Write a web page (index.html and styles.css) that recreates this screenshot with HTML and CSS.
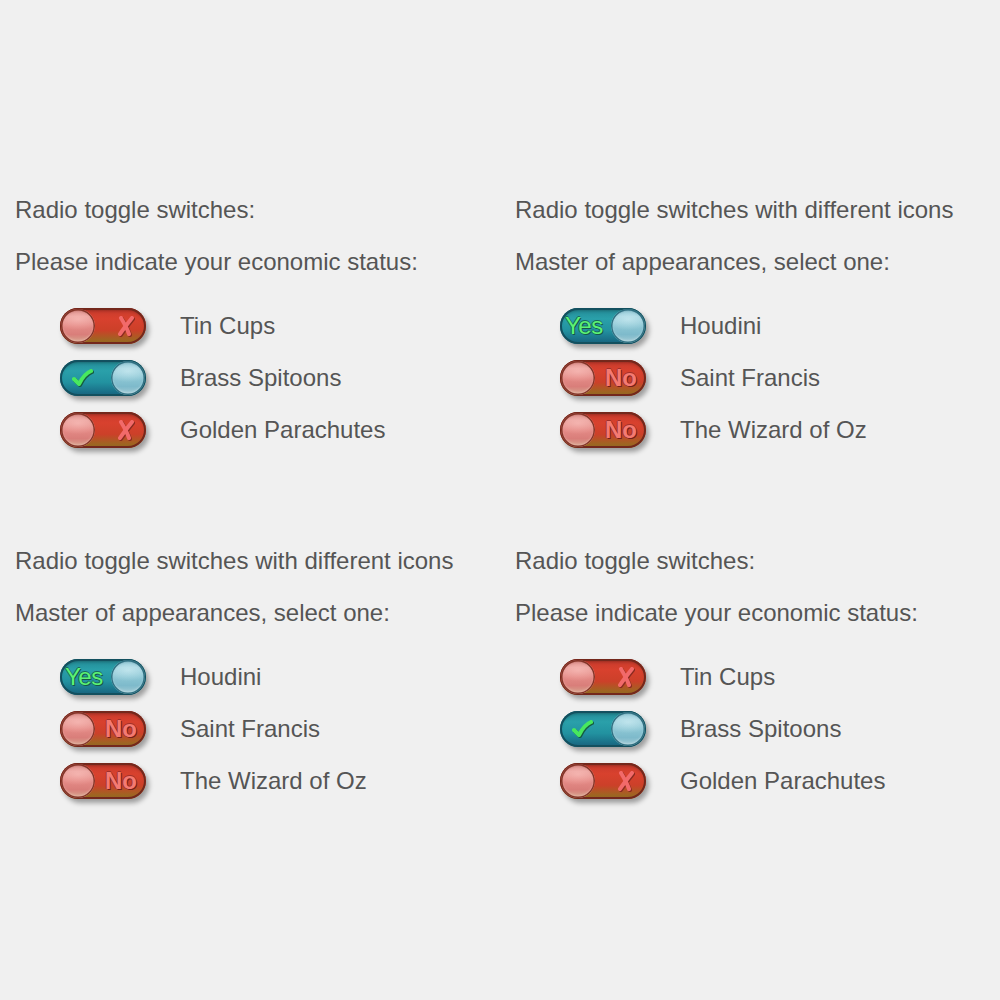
FILE: index.html
```html
<!DOCTYPE html>
<html>
<head>
<meta charset="utf-8">
<link rel="stylesheet" href="styles.css">
</head>
<body>
<div class="page">
  <section class="group">
    <h2 class="title">Radio toggle switches:</h2>
    <p class="prompt">Please indicate your economic status:</p>
    <div class="rows">
      <div class="row"><span class="tog off"><span class="knob"></span><span class="ico x"><svg viewBox="0 0 20 22" width="20" height="22"><path d="M5 3 C8 8 11 13 13 19" /><path d="M16 3 C12 8 8 13 4 19" /></svg></span></span><span class="lbl">Tin Cups</span></div>
      <div class="row"><span class="tog on"><span class="ico chk"><svg viewBox="0 0 22 20" width="22" height="20"><path d="M3 11 L8 16 C11 10 15 5 20 3" /></svg></span><span class="knob"></span></span><span class="lbl">Brass Spitoons</span></div>
      <div class="row"><span class="tog off"><span class="knob"></span><span class="ico x"><svg viewBox="0 0 20 22" width="20" height="22"><path d="M5 3 C8 8 11 13 13 19" /><path d="M16 3 C12 8 8 13 4 19" /></svg></span></span><span class="lbl">Golden Parachutes</span></div>
    </div>
  </section>
  <section class="group">
    <h2 class="title">Radio toggle switches with different icons</h2>
    <p class="prompt">Master of appearances, select one:</p>
    <div class="rows">
      <div class="row"><span class="tog on"><span class="ico yes">Yes</span><span class="knob"></span></span><span class="lbl">Houdini</span></div>
      <div class="row"><span class="tog off"><span class="knob"></span><span class="ico no">No</span></span><span class="lbl">Saint Francis</span></div>
      <div class="row"><span class="tog off"><span class="knob"></span><span class="ico no">No</span></span><span class="lbl">The Wizard of Oz</span></div>
    </div>
  </section>
  <section class="group">
    <h2 class="title">Radio toggle switches with different icons</h2>
    <p class="prompt">Master of appearances, select one:</p>
    <div class="rows">
      <div class="row"><span class="tog on"><span class="ico yes">Yes</span><span class="knob"></span></span><span class="lbl">Houdini</span></div>
      <div class="row"><span class="tog off"><span class="knob"></span><span class="ico no">No</span></span><span class="lbl">Saint Francis</span></div>
      <div class="row"><span class="tog off"><span class="knob"></span><span class="ico no">No</span></span><span class="lbl">The Wizard of Oz</span></div>
    </div>
  </section>
  <section class="group">
    <h2 class="title">Radio toggle switches:</h2>
    <p class="prompt">Please indicate your economic status:</p>
    <div class="rows">
      <div class="row"><span class="tog off"><span class="knob"></span><span class="ico x"><svg viewBox="0 0 20 22" width="20" height="22"><path d="M5 3 C8 8 11 13 13 19" /><path d="M16 3 C12 8 8 13 4 19" /></svg></span></span><span class="lbl">Tin Cups</span></div>
      <div class="row"><span class="tog on"><span class="ico chk"><svg viewBox="0 0 22 20" width="22" height="20"><path d="M3 11 L8 16 C11 10 15 5 20 3" /></svg></span><span class="knob"></span></span><span class="lbl">Brass Spitoons</span></div>
      <div class="row"><span class="tog off"><span class="knob"></span><span class="ico x"><svg viewBox="0 0 20 22" width="20" height="22"><path d="M5 3 C8 8 11 13 13 19" /><path d="M16 3 C12 8 8 13 4 19" /></svg></span></span><span class="lbl">Golden Parachutes</span></div>
    </div>
  </section>
</div>
</body>
</html>
```

FILE: styles.css
```css
html, body {
  margin: 0;
  padding: 0;
  background: #f0f0f0;
}
body {
  font-family: "Liberation Sans", Arial, sans-serif;
  color: #555555;
  width: 1000px;
  height: 1000px;
  overflow: hidden;
}
.page {
  display: grid;
  grid-template-columns: 500px 500px;
  row-gap: 99px;
  padding-top: 196px;
}
.group {
  padding-left: 15px;
}
.title, .prompt {
  margin: 0;
  font-size: 24px;
  font-weight: normal;
  line-height: 28px;
  white-space: nowrap;
}
.title { margin-bottom: 24px; }
.prompt { margin-bottom: 32px; }
.rows {
  display: flex;
  flex-direction: column;
  gap: 16px;
  padding-left: 45px;
}
.row {
  display: flex;
  align-items: center;
  height: 36px;
}
.lbl {
  font-size: 24px;
  line-height: 36px;
  margin-left: 34px;
  white-space: nowrap;
}
.tog {
  box-sizing: border-box;
  width: 86px;
  height: 36px;
  border-radius: 18px;
  display: flex;
  align-items: center;
  justify-content: space-between;
  padding: 0 1px;
}
.tog.off {
  background: linear-gradient(to bottom, #c63a2c 0%, #d8412e 30%, #cc4029 62%, #a06422 88%, #8c6a20 100%);
  box-shadow: 3px 4px 5px rgba(0,0,0,0.35), inset 0 0 0 2px #74281c, inset 0 3px 3px rgba(0,0,0,0.25);
}
.tog.on {
  background: linear-gradient(to bottom, #228894 0%, #2aa0aa 30%, #2292a0 62%, #1a7088 88%, #185f7a 100%);
  box-shadow: 3px 4px 5px rgba(0,0,0,0.35), inset 0 0 0 2px #13505f, inset 0 3px 3px rgba(0,0,0,0.25);
}
.knob {
  box-sizing: border-box;
  width: 34px;
  height: 34px;
  border-radius: 50%;
  flex: none;
}
.off .knob {
  background:
    radial-gradient(ellipse 70% 32% at 50% 30%, rgba(255,200,195,0.55), rgba(255,200,195,0) 100%),
    linear-gradient(to bottom, #d4827e 0%, #e9a09c 22%, #e48a86 50%, #d97e7a 75%, #d6a890 100%);
  box-shadow: inset 0 0 0 1.5px #843428, inset 0 -2px 3px rgba(255,240,220,0.45), inset 0 2px 2px rgba(120,30,20,0.25);
}
.on .knob {
  background:
    radial-gradient(ellipse 70% 32% at 50% 30%, rgba(220,245,250,0.55), rgba(220,245,250,0) 100%),
    linear-gradient(to bottom, #84c0ce 0%, #a0d2de 22%, #8cc6d4 50%, #7ebacb 75%, #a4ccd6 100%);
  box-shadow: inset 0 0 0 1.5px #2f7082, inset 0 -2px 3px rgba(255,255,255,0.45), inset 0 2px 2px rgba(20,70,90,0.25);
}
.ico {
  display: flex;
  align-items: center;
  justify-content: center;
}
.ico svg {
  fill: none;
  stroke-linecap: round;
  stroke-linejoin: round;
}
.ico.x {
  margin-right: 9px;
}
.ico.x svg path {
  stroke: #f26a6a;
  stroke-width: 4;
}
.ico.x svg {
  filter: drop-shadow(1px 1px 0 #8a2a20);
}
.ico.chk {
  margin-left: 10px;
}
.ico.chk svg path {
  stroke: #48e85e;
  stroke-width: 4;
}
.ico.chk svg {
  filter: drop-shadow(1px 1px 0 #145a40);
}
.ico.yes {
  font-size: 24px;
  line-height: 1;
  color: #5cf274;
  margin-left: 4px;
  margin-right: -3px;
  text-shadow: 1px 1px 0 #165848, -1px 0 0 #1a6a5a, 0 -1px 0 #1a6a5a;
  letter-spacing: -0.5px;
}
.ico.no {
  font-size: 24px;
  line-height: 1;
  font-weight: bold;
  color: #f47a72;
  margin-right: 8px;
  text-shadow: 1px 1px 0 #74201a, 0 -1px 0 #a0302a, -1px 0 0 #a0302a;
}
```
